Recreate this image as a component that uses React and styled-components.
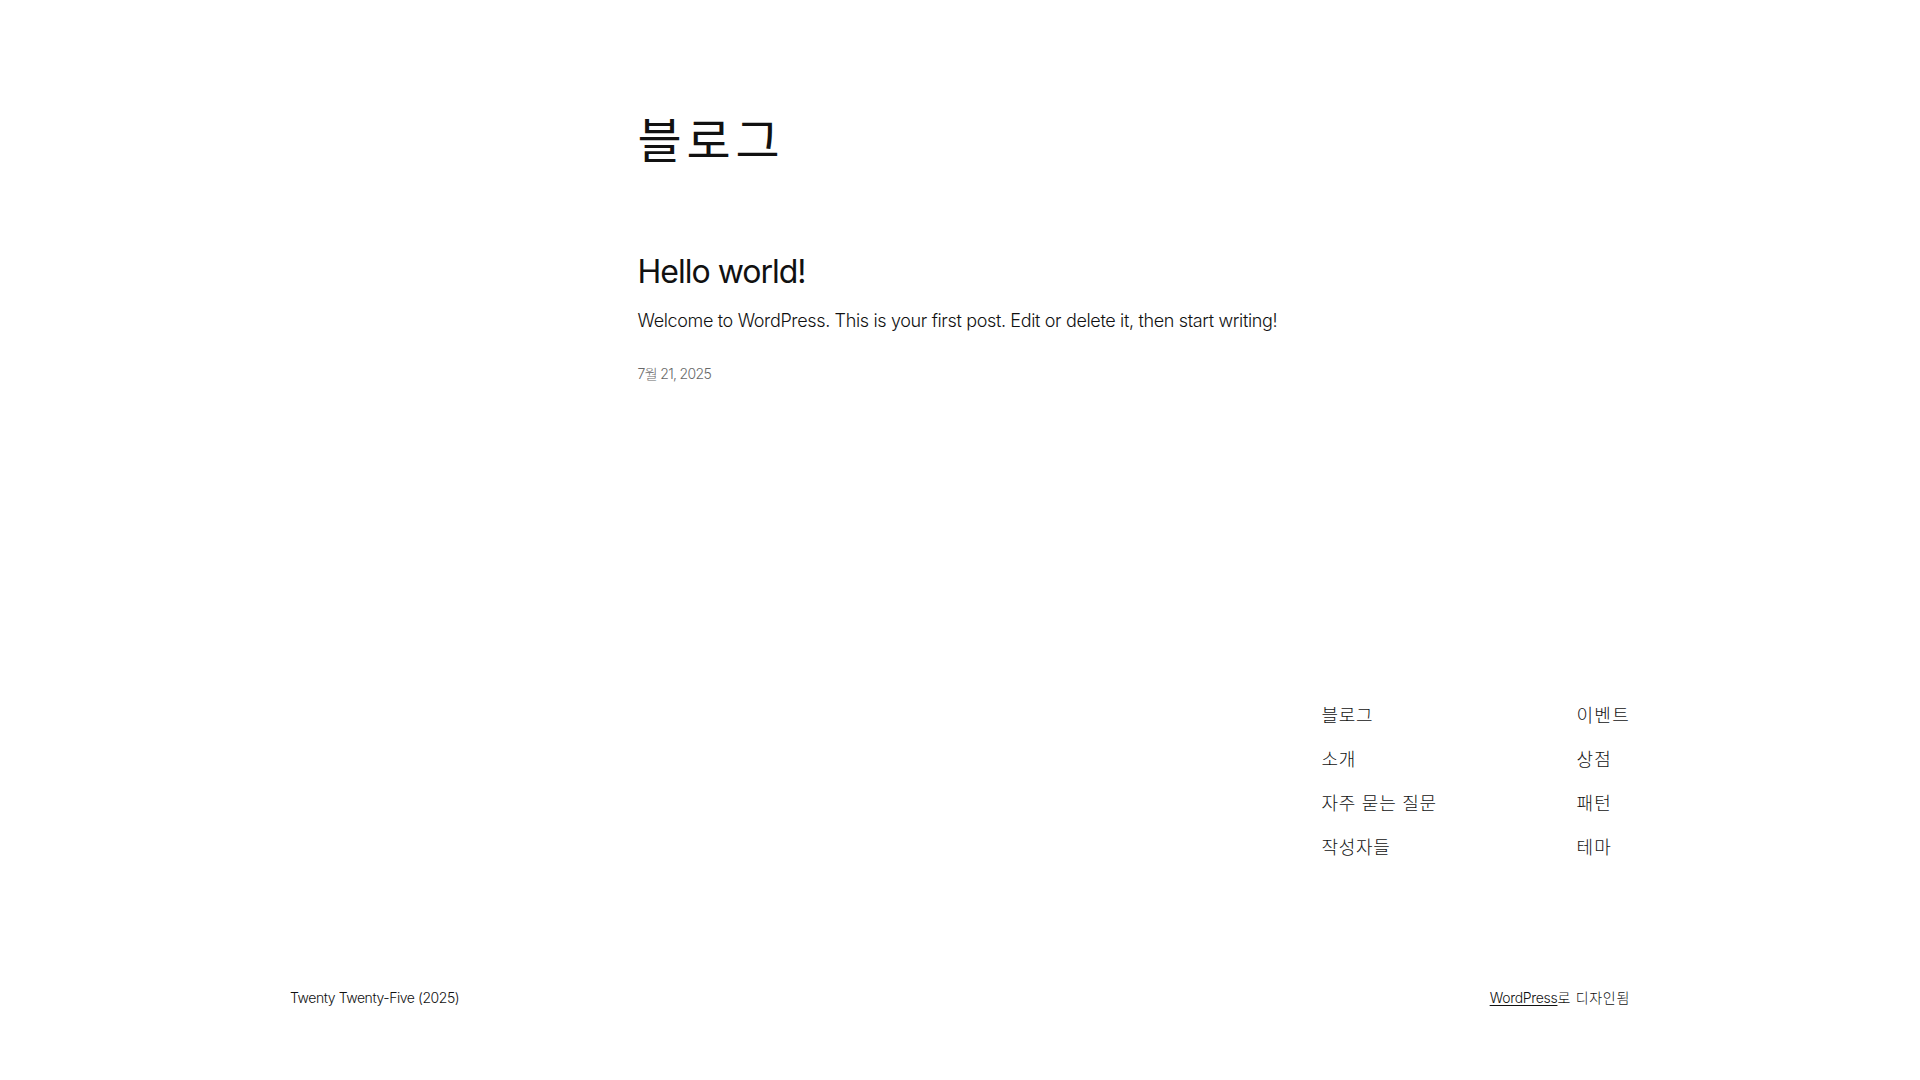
import React from "react";
import styled, { createGlobalStyle } from "styled-components";

const GlobalStyle = createGlobalStyle`
  html, body { margin: 0; padding: 0; background: #ffffff; }
  body {
    font-family: Inter, "Noto Sans CJK KR", sans-serif;
    color: #111111;
    -webkit-font-smoothing: antialiased;
  }
`;

const Page = styled.div`
  display: flex;
  flex-direction: column;
  min-height: 100vh;
`;

const Main = styled.main`
  width: 645px;
  margin: 0 auto;
  padding-top: 114px;
`;

const PageTitle = styled.h1`
  margin: 0;
  font-size: 48px;
  font-weight: 400;
  line-height: 54px;
  letter-spacing: 0.1em;
`;

const PostList = styled.ul`
  list-style: none;
  margin: 86px 0 0;
  padding: 0;
`;

const Post = styled.li`
  display: flex;
  flex-direction: column;
`;

const PostTitle = styled.h2`
  margin: 0;
  font-size: 32px;
  font-weight: 400;
  line-height: 36px;
  letter-spacing: -1px;
`;

const Excerpt = styled.p`
  margin: 18px 0 0;
  font-size: 18px;
  font-weight: 300;
  line-height: 25.2px;
  letter-spacing: -0.35px;
  white-space: nowrap;
`;

const PostDate = styled.time`
  margin-top: 31px;
  font-size: 14px;
  font-weight: 300;
  line-height: 19.6px;
  letter-spacing: -0.65px;
  color: #686868;
`;

const Footer = styled.footer`
  width: 1340px;
  margin: 319px auto 0;
  display: flex;
  flex-direction: column;
`;

const FooterTop = styled.div`
  display: flex;
  justify-content: space-between;
  align-items: flex-start;
`;

const NavGroup = styled.div`
  display: grid;
  grid-template-columns: 255px auto;
`;

const NavColumn = styled.ul`
  list-style: none;
  margin: 0;
  padding: 0;
  display: flex;
  flex-direction: column;
  gap: 18.8px;
`;

const NavLink = styled.a`
  display: block;
  font-size: 18px;
  font-weight: 300;
  line-height: 25.2px;
  letter-spacing: ${(p) => (p.$wide ? "0.07em" : "0.04em")};
  color: #111111;
  text-decoration: none;
  white-space: nowrap;
`;

const Credits = styled.div`
  margin-top: 128px;
  display: flex;
  justify-content: space-between;
  font-size: 14px;
  font-weight: 300;
  line-height: 19.6px;
`;

const CreditText = styled.span`
  letter-spacing: ${(p) => (p.$korean ? "0.05em" : "-0.44px")};
`;

const CreditLink = styled.a`
  color: #111111;
  letter-spacing: -0.3px;
  text-decoration: underline;
  text-underline-offset: 2px;
  text-decoration-thickness: 1px;
`;

const col1 = ["블로그", "소개", "자주 묻는 질문", "작성자들"];
const col2 = ["이벤트", "상점", "패턴", "테마"];

export default function App() {
  return (
    <Page>
      <GlobalStyle />
      <Main>
        <PageTitle>블로그</PageTitle>
        <PostList>
          <Post>
            <PostTitle>Hello world!</PostTitle>
            <Excerpt>
              Welcome to WordPress. This is your first post. Edit or delete it,
              then start writing!
            </Excerpt>
            <PostDate>7월 21, 2025</PostDate>
          </Post>
        </PostList>
      </Main>
      <Footer>
        <FooterTop>
          <div />
          <NavGroup>
            <NavColumn>
              {col1.map((t) => (
                <li key={t}>
                  <NavLink href="#">{t}</NavLink>
                </li>
              ))}
            </NavColumn>
            <NavColumn>
              {col2.map((t) => (
                <li key={t}>
                  <NavLink href="#" $wide>
                    {t}
                  </NavLink>
                </li>
              ))}
            </NavColumn>
          </NavGroup>
        </FooterTop>
        <Credits>
          <CreditText>Twenty Twenty-Five (2025)</CreditText>
          <CreditText $korean>
            <CreditLink href="#">WordPress</CreditLink>로 디자인됨
          </CreditText>
        </Credits>
      </Footer>
    </Page>
  );
}
